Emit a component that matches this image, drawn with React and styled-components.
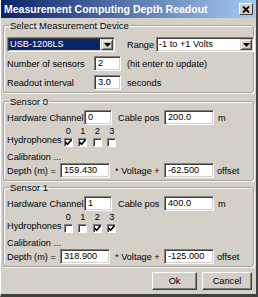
import styled, { createGlobalStyle } from "styled-components";

const Global = createGlobalStyle`
    html, body { margin:0; padding:0; background:#ffffff; }
    * { box-sizing:border-box; }
`

const sensors = [
    { name: "Sensor 0", channel: "0", cable: "200.0", hydro: [true, true, false, false], depth: "159.430", offset: "-62.500" },
    { name: "Sensor 1", channel: "1", cable: "400.0", hydro: [false, false, true, true], depth: "318.900", offset: "-125.000" },
];

function Check({ on }) {
    return (
        <Box>
            {on && (
                <svg width="7" height="7" viewBox="0 0 7 7">
                    <path d="M0.5 3 L2.5 5.2 L6.5 0.8" stroke="#000" strokeWidth="1.6" fill="none" />
                </svg>
            )}
        </Box>
    );
}

function Combo({ value, selected, width }) {
    return (
        <ComboBox $width={width}>
            <ComboText $selected={selected}>{value}</ComboText>
            <ArrowBtn>
                <svg width="7" height="4" viewBox="0 0 7 4"><path d="M0 0 H7 L3.5 4 Z" fill="#000" /></svg>
            </ArrowBtn>
        </ComboBox>
    );
}

function SensorGroup({ s, gap }) {
    return (
        <Group $gap={gap} $pt={3}>
            <Legend>{s.name}</Legend>
            <Row>
                <Label $w={77}>Hardware Channel</Label>
                <Field $w={28}>{s.channel}</Field>
                <Label $w={46} $ml={6}>Cable pos</Label>
                <Field $w={50}>{s.cable}</Field>
                <Label $ml={4}>m</Label>
            </Row>
            <HydroRow>
                <Label $w={54} $mb={3}>Hydrophones</Label>
                {s.hydro.map((on, i) => (
                    <HydroCol key={i}>
                        <Digit>{i}</Digit>
                        <Check on={on} />
                    </HydroCol>
                ))}
            </HydroRow>
            <Caption>Calibration ...</Caption>
            <Row>
                <Label $w={53}>Depth (m) =</Label>
                <Field $w={50}>{s.depth}</Field>
                <Label $w={49} $ml={5}>* Voltage +</Label>
                <Field $w={50}>{s.offset}</Field>
                <Label $ml={3}>offset</Label>
            </Row>
        </Group>
    );
}

function App() {
    return (
        <>
            <Global />
            <Window>
                <TitleBar>
                    <Title>Measurement Computing Depth Readout</Title>
                    <CloseBtn>
                        <svg width="8" height="7" viewBox="0 0 8 7">
                            <path d="M1 0.5 L7 6.5 M7 0.5 L1 6.5" stroke="#000" strokeWidth="1.8" />
                        </svg>
                    </CloseBtn>
                </TitleBar>
                <Body>
                    <Group $gap={2} $pt={6}>
                        <Legend>Select Measurement Device</Legend>
                        <DeviceGrid>
                            <Span2><Combo value="USB-1208LS" selected width={108} /></Span2>
                            <Row>
                                <Label $w={29}>Range</Label>
                                <Combo value="-1 to +1 Volts" width={98} />
                            </Row>
                            <Label>Number of sensors</Label>
                            <Field $w={27}>2</Field>
                            <Label>(hit enter to update)</Label>
                            <Label>Readout interval</Label>
                            <Field $w={27}>3.0</Field>
                            <Label>seconds</Label>
                        </DeviceGrid>
                    </Group>
                    {sensors.map((s, i) => <SensorGroup key={s.name} s={s} gap={i === 0 ? 3 : 1} />)}
                    <Buttons>
                        <Button $w={45}>Ok</Button>
                        <Button $w={50}>Cancel</Button>
                    </Buttons>
                </Body>
            </Window>
        </>
    );
}
export default App;

const Window = styled.div`
    width:258px;
    height:297px;
    background:#d4d0c8;
    border-left:1px solid #ffffff;
    border-right:2px solid #404040;
    border-bottom:3px solid #404040;
    display:flex;
    flex-direction:column;
    font-family:"Liberation Sans", Arial, sans-serif;
    font-size:9.2px;
    color:#000;
    overflow:hidden;
`
const TitleBar = styled.div`
    height:18px;
    flex-shrink:0;
    background:linear-gradient(to right, #0a246a, #a6caf0);
    display:flex;
    align-items:center;
    justify-content:space-between;
    padding:0 3px 0 3px;
`
const Title = styled.div`
    color:#fff;
    font-weight:bold;
    font-size:10.5px;
    white-space:nowrap;
`
const CloseBtn = styled.div`
    width:14px;
    height:12px;
    background:#d4d0c8;
    border:1px solid;
    border-color:#fff #404040 #404040 #fff;
    display:flex;
    align-items:center;
    justify-content:center;
`
const Body = styled.div`
    flex:1;
    display:flex;
    flex-direction:column;
    padding:0 2px;
`
const Group = styled.fieldset`
    margin:${p => p.$gap}px 0 0 0;
    padding:${p => p.$pt}px 2px 2px 3px;
    border:1px solid #a0a0a0;
    border-radius:3px;
    box-shadow:1px 1px 0 #fff, inset 1px 1px 0 #fff;
    min-width:0;
    flex-shrink:0;
`
const Legend = styled.legend`
    padding:0 1px;
    margin-left:2px;
    line-height:11px;
    font-size:9.5px;
`
const DeviceGrid = styled.div`
    display:grid;
    grid-template-columns:81px 27px 1fr;
    column-gap:6px;
    row-gap:4px;
    align-items:center;
`
const Span2 = styled.div`
    grid-column:1 / span 2;
`
const Row = styled.div`
    display:flex;
    align-items:center;
    height:15px;
`
const Label = styled.span`
    width:${p => p.$w ? p.$w + "px" : "auto"};
    margin-left:${p => p.$ml || 0}px;
    margin-bottom:${p => p.$mb || 0}px;
    white-space:nowrap;
    flex-shrink:0;
`
const Field = styled.div`
    width:${p => p.$w}px;
    height:15px;
    background:#fff;
    border:1px solid;
    border-color:#808080 #fff #fff #808080;
    box-shadow:inset 1px 1px 0 #404040, inset -1px -1px 0 #d4d0c8;
    padding:0 3px;
    line-height:13px;
    white-space:nowrap;
    overflow:hidden;
    flex-shrink:0;
`
const ComboBox = styled.div`
    width:${p => p.$width}px;
    height:15px;
    background:#fff;
    border:1px solid;
    border-color:#808080 #fff #fff #808080;
    box-shadow:inset 1px 1px 0 #404040, inset -1px -1px 0 #d4d0c8;
    padding:1px;
    display:flex;
    align-items:stretch;
    flex-shrink:0;
`
const ComboText = styled.div`
    flex:1;
    background:${p => p.$selected ? "#0a246a" : "transparent"};
    color:${p => p.$selected ? "#fff" : "#000"};
    line-height:11px;
    padding-left:1px;
    white-space:nowrap;
    overflow:hidden;
`
const ArrowBtn = styled.div`
    width:12px;
    margin-left:1px;
    background:#d4d0c8;
    border:1px solid;
    border-color:#d4d0c8 #404040 #404040 #d4d0c8;
    box-shadow:inset 1px 1px 0 #fff, inset -1px -1px 0 #808080;
    display:flex;
    align-items:center;
    justify-content:center;
`
const HydroRow = styled.div`
    display:flex;
    align-items:flex-end;
    margin-top:1px;
    height:22px;
`
const HydroCol = styled.div`
    width:14.5px;
    display:flex;
    flex-direction:column;
    align-items:center;
    gap:2px;
`
const Digit = styled.span`
    line-height:9px;
`
const Box = styled.div`
    width:9px;
    height:9px;
    background:#fff;
    border:1px solid;
    border-color:#808080 #fff #fff #808080;
    box-shadow:inset 1px 1px 0 #404040;
    display:flex;
    align-items:center;
    justify-content:center;
    margin-bottom:1px;
`
const Caption = styled.div`
    line-height:11px;
    margin-top:4px;
`
const Buttons = styled.div`
    display:flex;
    justify-content:flex-end;
    gap:5px;
    margin-top:5px;
    padding-right:2px;
`
const Button = styled.div`
    width:${p => p.$w}px;
    height:18px;
    background:#d4d0c8;
    border:1px solid;
    border-color:#fff #404040 #404040 #fff;
    box-shadow:inset -1px -1px 0 #808080;
    display:flex;
    align-items:center;
    justify-content:center;
`
